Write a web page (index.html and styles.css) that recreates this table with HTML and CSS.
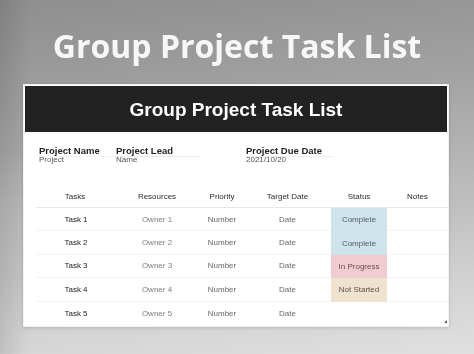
FILE: index.html
```html
<!DOCTYPE html>
<html lang="en">
<head>
    <meta charset="UTF-8">
    <meta name="viewport" content="width=device-width, initial-scale=1.0">
    <title>Group Project Task List</title>
    <link rel="stylesheet" href="styles.css">
</head>
<body>
    <h1 class="page-title">Group Project Task List</h1>

    <div class="sheet">
        <div class="sheet-header">Group Project Task List</div>

        <div class="project-info">
            <div class="info-item">
                <div class="info-label">Project Name</div>
                <div class="info-value">Project</div>
            </div>
            <div class="info-item">
                <div class="info-label">Project Lead</div>
                <div class="info-value">Name</div>
            </div>
            <div class="info-item">
                <div class="info-label">Project Due Date</div>
                <div class="info-value">2021/10/20</div>
            </div>
        </div>

        <div class="task-table">
            <div class="row head">
                <div>Tasks</div>
                <div>Resources</div>
                <div>Priority</div>
                <div>Target Date</div>
                <div>Status</div>
                <div>Notes</div>
            </div>
            <div class="row">
                <div class="task">Task 1</div>
                <div class="owner">Owner 1</div>
                <div class="muted">Number</div>
                <div class="muted">Date</div>
                <div class="status complete">Complete</div>
                <div></div>
            </div>
            <div class="row">
                <div class="task">Task 2</div>
                <div class="owner">Owner 2</div>
                <div class="muted">Number</div>
                <div class="muted">Date</div>
                <div class="status complete">Complete</div>
                <div></div>
            </div>
            <div class="row">
                <div class="task">Task 3</div>
                <div class="owner">Owner 3</div>
                <div class="muted">Number</div>
                <div class="muted">Date</div>
                <div class="status progress">In Progress</div>
                <div></div>
            </div>
            <div class="row">
                <div class="task">Task 4</div>
                <div class="owner">Owner 4</div>
                <div class="muted">Number</div>
                <div class="muted">Date</div>
                <div class="status not-started">Not Started</div>
                <div></div>
            </div>
            <div class="row last">
                <div class="task">Task 5</div>
                <div class="owner">Owner 5</div>
                <div class="muted">Number</div>
                <div class="muted">Date</div>
                <div class="status"></div>
                <div></div>
            </div>
        </div>

        <span class="resize-mark"></span>
    </div>
</body>
</html>
```

FILE: styles.css
```css
* {
    margin: 0;
    padding: 0;
    box-sizing: border-box;
}

body {
    width: 474px;
    height: 354px;
    overflow: hidden;
    font-family: "Liberation Sans", Arial, sans-serif;
    background:
        radial-gradient(ellipse 260px 70px at 120px 215px, rgba(255, 255, 255, 0.1), transparent),
        linear-gradient(to right, rgba(0, 0, 0, 0.1), transparent 30px),
        linear-gradient(174deg, #8e8e8e 0%, #a2a2a2 30%, #b8b8b8 55%, #d2d2d2 82%, #e0e0e0 100%);
}

.page-title {
    padding-top: 26px;
    height: 66px;
    margin-bottom: 18px;
    font-family: "Open Sans", sans-serif;
    font-size: 32px;
    font-weight: 700;
    line-height: 40px;
    color: #f7f7f7;
    text-align: center;
    transform: translateZ(0);
}

/* the sheet sits on its own layer so the small text gets grayscale smoothing */
.sheet {
    position: relative;
    width: 426px;
    height: 243px;
    margin-left: 23px;
    padding: 1px;
    background: #fff;
    border: 1px solid #f2f2f2;
    box-shadow: 0 1px 3px rgba(0, 0, 0, 0.15);
    transform: translateZ(0);
}

.sheet-header {
    height: 46px;
    padding-top: 2px;
    background: #222;
    color: #fff;
    font-size: 19px;
    font-weight: 700;
    line-height: 44px;
    text-align: center;
}

.project-info {
    display: grid;
    grid-template-columns: 77px 130px 100px;
    padding: 13px 0 0 14px;
}

.info-label {
    width: 84px;
    font-size: 9.5px;
    font-weight: 700;
    line-height: 11px;
    color: #222;
    white-space: nowrap;
    border-bottom: 1px solid #ebebeb;
}

.info-item:first-child .info-label {
    width: 77px;
    border-bottom-color: #f4f4f4;
}

.info-item:last-child .info-label {
    width: 86px;
}

.info-value {
    margin-top: -1px;
    font-size: 8px;
    line-height: 8px;
    color: #555;
}

.task-table {
    margin: 22px 0 0 11px;
    width: 412px;
    font-size: 8px;
}

.row {
    display: grid;
    grid-template-columns: 78px 86px 44px 87px 56px 61px;
    height: 23.4px;
    border-bottom: 1px solid #f3f3f3;
}

.row > div {
    display: flex;
    align-items: center;
    justify-content: center;
    white-space: nowrap;
}

.row > div:first-child {
    margin-left: 2px;
}

.row.head {
    height: 22px;
    color: #2e2e2e;
    border-bottom: 1px solid #e6e6e6;
}

.row.head > div:first-child {
    margin-left: 0;
}

.row.last {
    border-bottom: none;
}

.task {
    color: #222;
}

.owner {
    color: #808080;
}

.muted {
    color: #666;
}

.status {
    margin-bottom: -1px;
}

.status.complete {
    background: #cfe4ea;
    color: #4f5d65;
}

.status.progress {
    background: #f0cbd1;
    color: #6b4f53;
}

.status.not-started {
    background: #efe3cf;
    color: #58534c;
}

.resize-mark {
    position: absolute;
    right: 1px;
    bottom: 3px;
    width: 0;
    height: 0;
    border-left: 3px solid transparent;
    border-bottom: 3px solid #555;
}
```
